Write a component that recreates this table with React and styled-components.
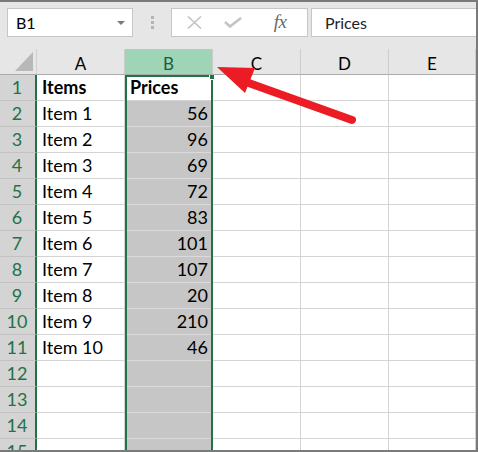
import React from 'react';
import styled, { createGlobalStyle } from 'styled-components';

const GlobalStyle = createGlobalStyle`
  html, body { margin: 0; padding: 0; background: #fff; }
  * { box-sizing: border-box; }
`;

const GREEN = '#217346';
const FONT = `Lato, "Liberation Sans", sans-serif`;

// whole window
const Frame = styled.div`
  position: relative;
  width: 478px;
  height: 452px;
  overflow: hidden;
  background: #fff;
  border-top: 2px solid #7a7a7a;
  border-right: 2px solid #7a7a7a;
  border-bottom: 2px solid #7a7a7a;
  font-family: ${FONT};
  color: #000;
`;

// formula bar
const FormulaBar = styled.div`
  height: 47px;
  background: #e6e6e6;
  display: flex;
  align-items: flex-start;
  padding: 6px 0 0 7px;
`;

const NameBox = styled.div`
  width: 126px;
  height: 29px;
  background: #fff;
  border: 1px solid #c6c6c6;
  display: flex;
  align-items: center;
  justify-content: space-between;
  padding: 0 7px 0 8px;
  font-size: 16px;
`;

const Caret = styled.span`
  width: 0;
  height: 0;
  border-left: 4px solid transparent;
  border-right: 4px solid transparent;
  border-top: 4px solid #7a7a7a;
  margin-top: 1px;
`;

const Grip = styled.div`
  width: 38px;
  height: 29px;
  display: flex;
  flex-direction: column;
  align-items: center;
  justify-content: center;
  gap: 2px;
`;

const GripDot = styled.span`
  width: 3px;
  height: 3px;
  background: #b4b4b4;
`;

const FnBox = styled.div`
  width: 137px;
  height: 29px;
  background: #fff;
  border: 1px solid #c6c6c6;
  display: flex;
  align-items: center;
  padding-left: 14px;
`;

const FnIcon = styled.span`
  display: flex;
  align-items: center;
  justify-content: center;
  width: ${p => p.$w}px;
`;

const Fx = styled.span`
  font-family: "Liberation Serif", serif;
  font-style: italic;
  font-size: 19px;
  color: #6a6a6a;
  letter-spacing: -0.5px;
  margin-top: -2px;
`;

const FormulaInput = styled.div`
  flex: 1;
  height: 29px;
  margin-left: 3px;
  background: #fff;
  border: 1px solid #c6c6c6;
  border-right: none;
  display: flex;
  align-items: center;
  padding-left: 13px;
  font-size: 16px;
  color: #222;
`;

// sheet grid
const Sheet = styled.div`
  display: grid;
  grid-template-columns: 37px repeat(4, 88px) 87px;
  grid-template-rows: repeat(16, 26px);
  font-size: 18px;
`;

const Corner = styled.div`
  grid-row: 1;
  grid-column: 1;
  background: #e6e6e6;
  border-bottom: 1px solid #ababab;
  border-right: 1px solid #d0d0d0;
  display: flex;
  align-items: flex-end;
  justify-content: flex-end;
  padding: 0 3px 3px 0;
`;

const CornerTriangle = styled.span`
  width: 0;
  height: 0;
  border-left: 18px solid transparent;
  border-bottom: 19px solid #b8b8b8;
`;

const ColHead = styled.div`
  grid-row: 1;
  grid-column: ${p => p.$c};
  background: ${p => (p.$active ? '#9fd5b7' : '#e6e6e6')};
  color: ${p => (p.$active ? '#1d5c3a' : '#000')};
  border-right: 1px solid #cdcdcd;
  border-bottom: 1px solid #ababab;
  text-align: center;
  line-height: 25px;
  padding-top: 2px;
  font-size: 17px;
`;

const RowHead = styled.div`
  grid-row: ${p => p.$r};
  grid-column: 1;
  background: #d4d4d4;
  color: ${GREEN};
  border-right: 2px solid ${GREEN};
  border-bottom: 1px solid #c2c2c2;
  text-align: center;
  line-height: 25px;
  padding-right: 1px;
`;

const Cell = styled.div`
  grid-row: ${p => p.$r};
  grid-column: ${p => p.$c};
  background: ${p => (p.$selected ? '#c6c6c6' : '#fff')};
  border-right: 1px solid #d4d4d4;
  border-bottom: 1px solid ${p => (p.$selected ? '#dadada' : '#d4d4d4')};
  line-height: 25px;
  padding: 0 4px 0 5px;
  text-align: ${p => p.$align || 'left'};
  font-weight: ${p => (p.$bold ? 700 : 400)};
  white-space: nowrap;
  overflow: hidden;
`;

// border around the selected column
const SelectionFrame = styled.div`
  grid-column: 3;
  grid-row: 2 / -1;
  position: relative;
  z-index: 1;
  border: 2px solid ${GREEN};
  pointer-events: none;
`;

const FillHandle = styled.span`
  position: absolute;
  right: -4px;
  top: -2px;
  width: 6px;
  height: 5px;
  background: ${GREEN};
  border: 1px solid #fff;
  border-top: none;
`;

const ArrowLayer = styled.svg`
  position: absolute;
  left: 0;
  top: 0;
  z-index: 2;
  pointer-events: none;
`;

const columns = ['A', 'B', 'C', 'D', 'E'];

const data = [
  ['Items', 'Prices'],
  ['Item 1', 56],
  ['Item 2', 96],
  ['Item 3', 69],
  ['Item 4', 72],
  ['Item 5', 83],
  ['Item 6', 101],
  ['Item 7', 107],
  ['Item 8', 20],
  ['Item 9', 210],
  ['Item 10', 46],
  ['', ''],
  ['', ''],
  ['', ''],
  ['', ''],
];

export default function App() {
  return (
    <>
      <GlobalStyle />
      <Frame>
        <FormulaBar>
          <NameBox>
            B1
            <Caret />
          </NameBox>
          <Grip>
            <GripDot />
            <GripDot />
            <GripDot />
          </Grip>
          <FnBox>
            <FnIcon $w={17}>
              <svg width="15" height="13" viewBox="0 0 15 13">
                <path d="M1 0.5 L14 12.5 M14 0.5 L1 12.5" stroke="#c4c4c4" strokeWidth="1.6" fill="none" />
              </svg>
            </FnIcon>
            <FnIcon $w={60}>
              <svg width="18" height="11" viewBox="0 0 18 11">
                <path d="M1 5 L6 9.5 L17 1" stroke="#c4c4c4" strokeWidth="2.6" fill="none" />
              </svg>
            </FnIcon>
            <FnIcon $w={34}>
              <Fx>fx</Fx>
            </FnIcon>
          </FnBox>
          <FormulaInput>Prices</FormulaInput>
        </FormulaBar>

        <Sheet>
          <Corner>
            <CornerTriangle />
          </Corner>
          {columns.map((c, j) => (
            <ColHead key={c} $c={j + 2} $active={c === 'B'}>{c}</ColHead>
          ))}
          {data.map(([item, price], i) => {
            const r = i + 2;
            return (
              <React.Fragment key={i}>
                <RowHead $r={r}>{i + 1}</RowHead>
                <Cell $r={r} $c={2} $bold={i === 0}>{item}</Cell>
                <Cell $r={r} $c={3} $bold={i === 0} $selected={i > 0} $align={i === 0 ? 'left' : 'right'}>
                  {price}
                </Cell>
                <Cell $r={r} $c={4} />
                <Cell $r={r} $c={5} />
                <Cell $r={r} $c={6} />
              </React.Fragment>
            );
          })}
          <SelectionFrame>
            <FillHandle />
          </SelectionFrame>
        </Sheet>

        <ArrowLayer width="478" height="452" viewBox="0 0 478 452">
          <line x1="246" y1="80" x2="352" y2="118" stroke="#ec1c24" strokeWidth="8" strokeLinecap="round" />
          <polygon points="217,65 255,66 245,91" fill="#ec1c24" />
        </ArrowLayer>
      </Frame>
    </>
  );
}
